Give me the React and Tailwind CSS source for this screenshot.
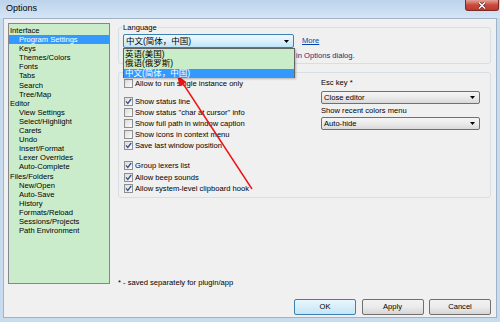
import React from 'react'

const font = "font-['Liberation_Sans','Noto_Sans_CJK_SC',sans-serif]"

const tree = [
    ['Interface', 0], ['Program Settings', 1, true], ['Keys', 1], ['Themes/Colors', 1], ['Fonts', 1], ['Tabs', 1], ['Search', 1], ['Tree/Map', 1],
    ['Editor', 0], ['View Settings', 1], ['Select/Highlight', 1], ['Carets', 1], ['Undo', 1], ['Insert/Format', 1], ['Lexer Overrides', 1], ['Auto-Complete', 1],
    ['Files/Folders', 0], ['New/Open', 1], ['Auto-Save', 1], ['History', 1], ['Formats/Reload', 1], ['Sessions/Projects', 1], ['Path Environment', 1],
]

function Arrow() {
    return (
        <svg width="5" height="3" viewBox="0 0 5 3" className="shrink-0">
            <path d="M0 0 H5 L2.5 3 Z" fill="#000" />
        </svg>
    )
}

function Check({ checked, label }) {
    return (
        <div className="flex items-center h-[11px] gap-[2px]">
            <div className="w-[9px] h-[9px] border border-[#8e8f8f] bg-gradient-to-br from-[#dcdcdc] to-[#fbfbfb] flex items-center justify-center">
                {checked && (
                    <svg width="7" height="7" viewBox="0 0 7 7">
                        <path d="M1 3.4 L2.8 5.4 L6.2 1" stroke="#3a4e8a" strokeWidth="1.3" fill="none" />
                    </svg>
                )}
            </div>
            <span className="text-[7.6px] leading-[9px] text-black whitespace-nowrap">{label}</span>
        </div>
    )
}

function Combo({ text }) {
    return (
        <div className="w-[159px] h-[13px] border border-[#707070] rounded-[2px] bg-gradient-to-b from-[#f4f4f4] via-[#ebebeb] to-[#d9d9d9] flex items-center pl-[2px] pr-[4px]">
            <span className="flex-1 text-[7.6px] leading-[9px] text-black">{text}</span>
            <Arrow />
        </div>
    )
}

function Button({ label, primary }) {
    return (
        <div className={`w-[62px] h-[16px] rounded-[2px] border flex items-center justify-center text-[7.6px] text-black ${primary
            ? 'border-[#3c7fb1] bg-gradient-to-b from-[#eaf6fd] to-[#c4e5f6]'
            : 'border-[#707070] bg-gradient-to-b from-[#f2f2f2] via-[#ebebeb] to-[#d5d5d5]'}`}>
            {label}
        </div>
    )
}

export default function App() {
    return (
        <div className={`relative w-[500px] h-[322px] overflow-hidden bg-[#c9dbee] flex flex-col ${font}`}>
            {/* title bar */}
            <div className="h-[18px] shrink-0 bg-gradient-to-b from-[#bcd3ec] to-[#d5e5f5] flex items-center pl-[6px]">
                <span className="text-[9px] text-black">Options</span>
            </div>
            <div className="absolute right-[1px] top-0 w-[34px] h-[11px] rounded-b-[3px] border border-t-0 border-[#7b2a25] bg-gradient-to-b from-[#e4a095] via-[#c9483d] to-[#c0392b] flex items-center justify-center">
                <svg width="8" height="7" viewBox="0 0 8 7">
                    <path d="M1 0.5 L7 6.5 M7 0.5 L1 6.5" stroke="#5a1a14" strokeWidth="2.6" />
                    <path d="M1 0.5 L7 6.5 M7 0.5 L1 6.5" stroke="#fff" strokeWidth="1.5" />
                </svg>
            </div>

            {/* client area */}
            <div className="flex-1 mx-[3px] mb-[4px] bg-[#f0f0f0] border border-[#9fb2c6] flex flex-col pl-[4px] pr-[5px] pt-[4px]">
                <div className="flex gap-[8px] h-[261px] shrink-0">
                    {/* tree */}
                    <div className="w-[102px] h-[261px] shrink-0 border border-[#828790] bg-[#cbeccb] pt-[2px] text-[7.6px]">
                        {tree.map(([t, d, sel]) => (
                            <div key={t} className={`h-[9.1px] leading-[9.1px] whitespace-nowrap ${sel ? 'bg-[#3399ff] text-white' : 'text-black'}`}>
                                <span className={d ? 'pl-[10px]' : 'pl-[1px]'}>{t}</span>
                            </div>
                        ))}
                    </div>

                    {/* right side */}
                    <div className="flex-1 flex flex-col">
                        <fieldset className="h-[41px] shrink-0 border border-[#d5dfe5] rounded-[3px] pl-[3px]">
                            <legend className="px-[1px] text-[7.6px] leading-[9px] text-black">Language</legend>
                            <div className="flex items-center mt-[2px] ml-[1px]">
                                <div className="relative">
                                    <div className="w-[171px] h-[14px] border border-[#3c7fb1] rounded-[2px] bg-gradient-to-b from-[#eef8fe] via-[#dcf1fc] to-[#bde4f8] flex items-center pl-[2px] pr-[4px]">
                                        <span className="flex-1 text-[8.5px] leading-[10px] text-black">中文(简体，中国)</span>
                                        <Arrow />
                                    </div>
                                    <div className="absolute left-0 top-full w-[172px] h-[30px] border border-[#646464] bg-[#c9ecc9] shadow-[1px_1px_2px_rgba(0,0,0,0.25)] pt-[0.5px] text-[8.5px] leading-[9.5px] z-10">
                                        <div className="pl-[1px] text-black">英语(美国)</div>
                                        <div className="pl-[1px] text-black">俄语(俄罗斯)</div>
                                        <div className="pl-[1px] bg-[#3399ff] text-white">中文(简体，中国)</div>
                                    </div>
                                </div>
                                <span className="ml-[8px] text-[7.6px] text-[#0645ad] underline">More</span>
                            </div>
                            <div className="ml-[174px] mt-[3px] text-[7.6px] leading-[9px] text-[#1c2c7c] whitespace-nowrap">in Options dialog.</div>
                        </fieldset>

                        <div className="mt-[8px] h-[126px] shrink-0 border border-[#d5dfe5] rounded-[3px] flex pl-[5px] pt-[5px]">
                            <div className="w-[197px] flex flex-col">
                                <Check label="Allow to run single instance only" />
                                <div className="h-[7px]" />
                                <Check checked label="Show status line" />
                                <Check label={'Show status "char at cursor" info'} />
                                <Check label="Show full path in window caption" />
                                <Check label="Show icons in context menu" />
                                <Check checked label="Save last window position" />
                                <div className="h-[9px]" />
                                <Check checked label="Group lexers list" />
                                <div className="h-[0.5px]" />
                                <Check checked label="Allow beep sounds" />
                                <Check checked label="Allow system-level clipboard hook" />
                            </div>
                            <div className="w-[159px] flex flex-col">
                                <div className="h-[9px] leading-[9px] text-[7.6px] text-black">Esc key *</div>
                                <div className="mt-[3.5px]"><Combo text="Close editor" /></div>
                                <div className="mt-[2px] h-[9px] leading-[9px] text-[7.6px] text-black">Show recent colors menu</div>
                                <div className="mt-[2.5px]"><Combo text="Auto-hide" /></div>
                            </div>
                        </div>

                        <div className="mt-[80px] h-[9px] shrink-0 leading-[9px] text-[7.6px] text-black whitespace-nowrap">* - saved separately for plugin/app</div>
                    </div>
                </div>

                <div className="mt-[15px] flex justify-end gap-[5.5px]">
                    <Button label="OK" primary />
                    <Button label="Apply" />
                    <Button label="Cancel" />
                </div>
            </div>

            {/* red annotation arrow */}
            <svg className="absolute left-0 top-0 pointer-events-none" width="500" height="322" viewBox="0 0 500 322">
                <line x1="252" y1="189" x2="182" y2="82" stroke="#ee1111" strokeWidth="1.4" />
                <path d="M177 75 L186.4 82 L179.7 86.4 Z" fill="#ee1111" />
            </svg>
        </div>
    )
}
